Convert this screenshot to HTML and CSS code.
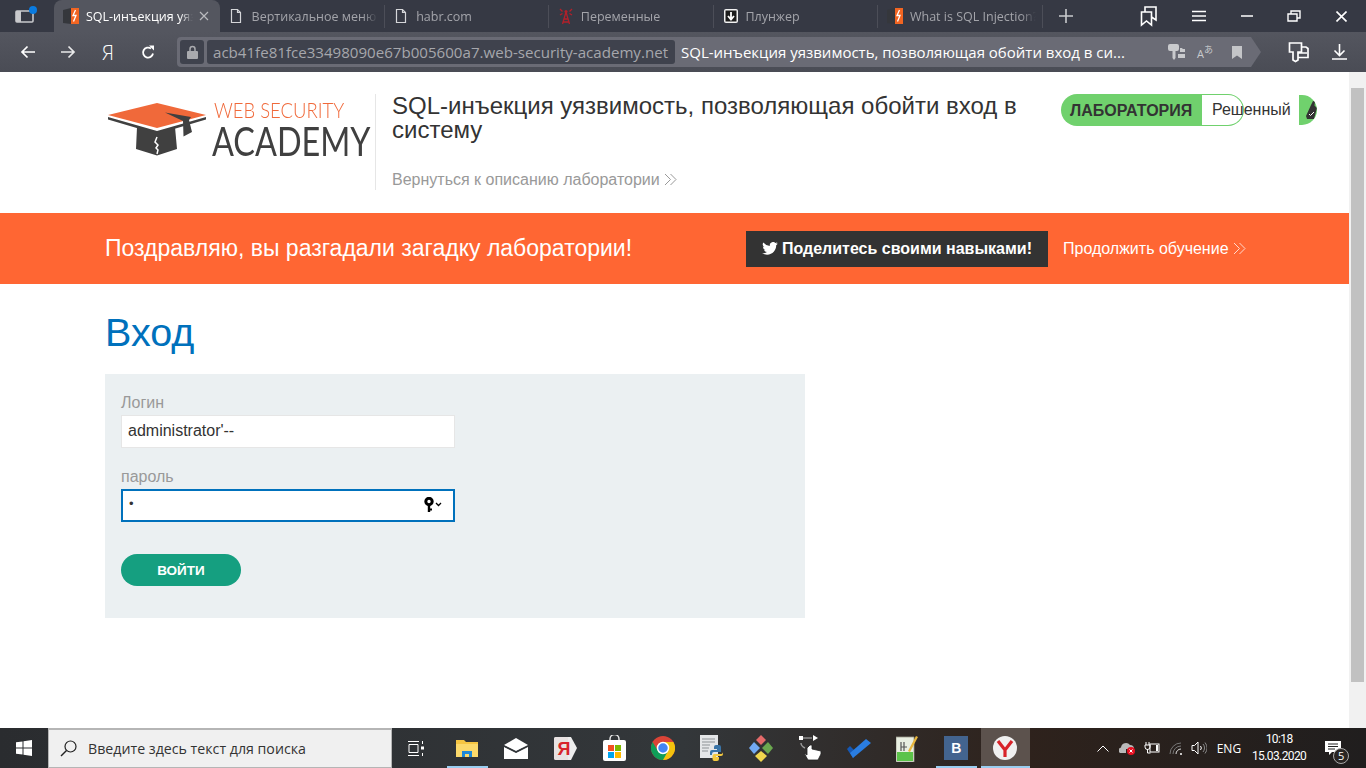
FILE: index.html
```html
<!DOCTYPE html>
<html lang="ru">
<head>
  <meta charset="UTF-8" />
  <title>SQL-инъекция уязвимость</title>
  <link rel="stylesheet" href="styles.css">
</head>
<body>

  <div class="tabstrip">
    <div class="sidebar-btn">
      <svg width="24" height="20" viewBox="0 0 24 20"><rect x="1" y="5" width="17" height="11" rx="1" fill="none" stroke="#c8c9cc" stroke-width="1.6"/><rect x="1" y="5" width="5" height="11" fill="#c8c9cc"/><circle cx="18" cy="4" r="4" fill="#0a7be0"/></svg>
    </div>
    <div class="tab active">
      <svg class="favicon" width="16" height="18" viewBox="0 0 16 18"><path d="M0 3 8 1v16l-8-1z" fill="#35373c"/><path d="M8 1h8v16H8z" fill="#f26522"/><path d="M12.500 3 10 8.500h3l-2.500 6" fill="none" stroke="#fff" stroke-width="1.300"/></svg>
      <span class="tab-title">SQL-инъекция уязвимость</span>
      <svg class="tab-close" width="10" height="10" viewBox="0 0 10 10"><path d="M1 1l8 8M9 1l-8 8" stroke="#b9babe" stroke-width="1.2"/></svg>
    </div>
    <div class="tab">
      <svg class="favicon" width="12" height="16" viewBox="0 0 12 16"><path d="M1.500 1.500h6l3 3v10h-9zM7.500 1.500v3h3" fill="none" stroke="#d5d6d9" stroke-width="1.2"/></svg>
      <span class="tab-title">Вертикальное меню</span>
    </div>
    <div class="tab">
      <svg class="favicon" width="12" height="16" viewBox="0 0 12 16"><path d="M1.500 1.500h6l3 3v10h-9zM7.500 1.500v3h3" fill="none" stroke="#d5d6d9" stroke-width="1.2"/></svg>
      <span class="tab-title">habr.com</span>
    </div>
    <div class="tab">
      <svg class="favicon" width="14" height="17" viewBox="0 0 14 17"><path d="M7 4 3.500 16M7 4l3.500 12M5 11h4M4.500 14h5M1 1l2.500 2.500M13 1l-2.500 2.500M1 7l2.500-1.500M13 7l-2.500-1.500" fill="none" stroke="#b3202a" stroke-width="1.3"/><circle cx="7" cy="3.500" r="1.500" fill="#b3202a"/></svg>
      <span class="tab-title">Переменные</span>
    </div>
    <div class="tab">
      <svg class="favicon" width="14" height="14" viewBox="0 0 14 14"><rect width="14" height="14" rx="2" fill="#f2f2f2"/><rect x="1.500" y="1.500" width="11" height="11" fill="#1c1c1c"/><path d="M7 3v7M4 7l3 3.500L10 7" fill="none" stroke="#fff" stroke-width="1.800"/></svg>
      <span class="tab-title">Плунжер</span>
    </div>
    <div class="tab last">
      <svg class="favicon" width="16" height="18" viewBox="0 0 16 18"><path d="M0 3 8 1v16l-8-1z" fill="#35373c"/><path d="M8 1h8v16H8z" fill="#f26522"/><path d="M12.500 3 10 8.500h3l-2.500 6" fill="none" stroke="#fff" stroke-width="1.300"/></svg>
      <span class="tab-title">What is SQL Injection?</span>
    </div>
    <div class="new-tab">
      <svg width="16" height="16" viewBox="0 0 16 16"><path d="M8 1v14M1 8h14" stroke="#c9cacd" stroke-width="1.600"/></svg>
    </div>
    <div class="win-btns">
      <svg class="win-bookmarks" width="18" height="22" viewBox="0 0 18 22"><path d="M1.500 7h10v13l-5-4-5 4zM5 7V2h11v13l-4.500-3" fill="none" stroke="#fff" stroke-width="1.600"/></svg>
      <svg width="14" height="12" viewBox="0 0 14 12"><path d="M0 1.500h14M0 6h14M0 10.500h14" stroke="#fff" stroke-width="1.500"/></svg>
      <svg width="12" height="2" viewBox="0 0 12 2"><path d="M0 1h12" stroke="#fff" stroke-width="1.500"/></svg>
      <svg width="14" height="12" viewBox="0 0 14 12"><path d="M1 4h9v7H1zM4 4V1h9v7h-3" fill="none" stroke="#fff" stroke-width="1.400"/></svg>
      <svg width="11" height="11" viewBox="0 0 11 11"><path d="M.5.500l10 10M10.500.500l-10 10" stroke="#fff" stroke-width="1.600"/></svg>
    </div>
  </div>

  <div class="toolbar">
    <div class="nav-btn"><svg width="16" height="14" viewBox="0 0 16 14"><path d="M15 7H2M7.500 1.500 2 7l5.500 5.500" fill="none" stroke="#fff" stroke-width="1.700"/></svg></div>
    <div class="nav-btn"><svg width="16" height="14" viewBox="0 0 16 14"><path d="M1 7h13M8.500 1.500 14 7l-5.500 5.500" fill="none" stroke="#e9e9ea" stroke-width="1.700"/></svg></div>
    <div class="nav-btn ya">Я</div>
    <div class="nav-btn"><svg width="14" height="15" viewBox="0 0 14 15"><path d="M12 8.500a5 5 0 1 1-2-5" fill="none" stroke="#fff" stroke-width="1.800"/><path d="M8 .500l5 0v5z" fill="#fff"/></svg></div>
    <div class="omnibox">
      <div class="lock-chip"><svg width="11" height="14" viewBox="0 0 11 14"><path d="M3 6V4a2.500 2.500 0 0 1 5 0v2" fill="none" stroke="#a9aaae" stroke-width="1.500"/><rect y="6" width="11" height="8" rx="1" fill="#a9aaae"/></svg></div>
      <div class="domain-chip">acb41fe81fce33498090e67b005600a7.web-security-academy.net</div>
      <div class="page-title">SQL-инъекция уязвимость, позволяющая обойти вход в си...</div>
      <svg class="omni-icon" width="17" height="16" viewBox="0 0 17 16"><path d="M2 0h7a2 2 0 0 1 2 2v3a2 2 0 0 1-2 2H7.500v7l-1.500 2-1.500-2V7H2a2 2 0 0 1-2-2V2a2 2 0 0 1 2-2z" fill="#c9cacd"/><path d="M12 4h2l.800 1H17v3h-5zM10 10h7v4h-7z" fill="#c9cacd"/></svg>
      <span class="omni-translate">A<small>あ</small></span>
      <svg class="omni-mark" width="10" height="13" viewBox="0 0 10 13"><path d="M0 0h10v13L5 9.500 0 13z" fill="#c4c5c8"/></svg>
    </div>
    <svg class="tool-right" width="22" height="22" viewBox="0 0 22 22"><path d="M1.500 2h12v9H10v8l-2.500 1.500L5 19v-8H1.500zM14 6h4l2 1.500v9h-10M10 12h9" fill="none" stroke="#fff" stroke-width="1.700"/></svg>
    <svg class="tool-right" width="15" height="16" viewBox="0 0 15 16"><path d="M7.500 0v11M2.500 6.500l5 5 5-5M0 15h15" fill="none" stroke="#fff" stroke-width="1.600"/></svg>
  </div>

  <div class="viewport">
    <div class="page">
      <header class="lab-header">
        <div class="logo">
          <svg class="logo-cap" width="100" height="56" viewBox="0 0 100 56">
            <path d="M1 13 50 1l49 12-49 13z" fill="#f0693a"/>
            <path d="M1 15l49 14 49-14v2.500L50 32 1 17.500z" fill="#404040"/>
            <path d="M30 25l20 6 18-6 2 22-20 6.500L29 47z" fill="#404040"/>
            <path d="M50 35l-2 5 3 3-2 3 2 2 -1 4" fill="none" stroke="#fff" stroke-width="1.500"/>
            <path d="M58 10.500 84 15l-2 3 3 12-8.500 4.500L76 19z" fill="#404040"/>
          </svg>
          <div class="logo-text">
            <span class="logo-top">WEB SECURITY</span>
            <span class="logo-bottom">ACADEMY</span>
          </div>
        </div>
        <div class="lab-title">
          <h2>SQL-инъекция уязвимость, позволяющая обойти вход в систему</h2>
          <a class="back-link" href="#">Вернуться к описанию лаборатории
            <svg class="chevrons" width="13" height="13" viewBox="0 0 13 13"><path d="M1 1l5.500 5.500L1 12M6.500 1 12 6.500 6.500 12" fill="none" stroke="#999" stroke-width="1"/></svg>
          </a>
        </div>
        <div class="lab-status">
          <span class="status-name">ЛАБОРАТОРИЯ</span>
          <span class="status-value">Решенный</span>
          <span class="status-icon">
            <svg width="11" height="18" viewBox="0 0 11 18"><path d="M7 0l2 .500-.500 4L11 7l-3 11H1L0 15l5-11z" fill="#333"/><path d="M3 13l1.500 1.500L8 11" fill="none" stroke="#fff" stroke-width="1"/></svg>
          </span>
        </div>
      </header>

      <section class="solved-banner">
        <h4>Поздравляю, вы разгадали загадку лаборатории!</h4>
        <a class="share-btn" href="#">
          <svg width="16" height="13" viewBox="0 0 24 20"><path d="M24 2.400a10 10 0 0 1-2.800.8A5 5 0 0 0 23.300.5a9.800 9.800 0 0 1-3.100 1.200 4.900 4.900 0 0 0-8.400 4.500A14 14 0 0 1 1.700.9a4.900 4.900 0 0 0 1.500 6.600 4.900 4.900 0 0 1-2.200-.6 4.900 4.900 0 0 0 3.900 4.900 4.900 4.900 0 0 1-2.200.1 4.900 4.900 0 0 0 4.600 3.400A9.900 9.900 0 0 1 0 17.300 14 14 0 0 0 7.500 19.500c9.100 0 14.300-7.700 14-14.600A10 10 0 0 0 24 2.400z" fill="#fff"/></svg>
          Поделитесь своими навыками!
        </a>
        <a class="continue-link" href="#">Продолжить обучение
          <svg class="chevrons" width="13" height="13" viewBox="0 0 13 13"><path d="M1 1l5.500 5.500L1 12M6.500 1 12 6.500 6.500 12" fill="none" stroke="#ffd9cc" stroke-width="1"/></svg>
        </a>
      </section>

      <main class="content">
        <h1>Вход</h1>
        <form class="login-form">
          <label for="username">Логин</label>
          <input id="username" type="text" value="administrator'--">
          <label for="password">пароль</label>
          <div class="password-wrap">
            <input id="password" type="password" value="a">
            <svg class="key-icon" width="18" height="15" viewBox="0 0 18 15"><circle cx="5" cy="4.500" r="3.200" fill="none" stroke="#000" stroke-width="3"/><path d="M3.800 8v7h2.400v-1.500H8v-2H6.200V8z" fill="#000"/><path d="M12 6l2.500 2.500L17 6" fill="none" stroke="#000" stroke-width="1.300"/></svg>
          </div>
          <button type="button">ВОЙТИ</button>
        </form>
      </main>
    </div>
    <div class="scrollbar"><div class="scroll-thumb"></div></div>
  </div>

  <footer class="taskbar">
    <div class="start-btn">
      <svg width="16" height="16" viewBox="0 0 16 16"><path d="M0 2.300 6.500 1.400V7.500H0zM7.500 1.200 16 0v7.500H7.500zM0 8.500h6.500v6.100L0 13.700zM7.500 8.500H16V16l-8.500-1.200z" fill="#fff"/></svg>
    </div>
    <div class="search-box">
      <svg width="17" height="17" viewBox="0 0 17 17"><circle cx="10.500" cy="6.500" r="5.500" fill="none" stroke="#222" stroke-width="1.200"/><path d="M6.500 10.500 1 16" stroke="#222" stroke-width="1.400"/></svg>
      <span>Введите здесь текст для поиска</span>
    </div>
    <div class="task-view">
      <svg width="17" height="15" viewBox="0 0 17 15"><path d="M0 .500h11M0 14.500h11M1 3.500h9v8H1zM14.500 0v3M14.500 12v3" fill="none" stroke="#fff" stroke-width="1"/><rect x="13" y="5.500" width="3" height="3" fill="#fff"/></svg>
    </div>
    <div class="task-icons">
      <div class="task-item open">
        <svg width="24" height="21" viewBox="0 0 24 21"><path d="M1 2h8l2 2h12v15H1z" fill="#f5c542"/><rect x="1" y="6" width="22" height="13" fill="#fbd96b"/><path d="M7 13h10v6h-3v-3h-4v3H7z" fill="#1e88d8"/></svg>
      </div>
      <div class="task-item">
        <svg width="24" height="21" viewBox="0 0 24 21"><path d="M0 7 12 0l12 7-12 6z" fill="#fff"/><path d="M0 9l12 6 12-6v12H0z" fill="#fff"/><path d="M0 8l12 6 6-3" fill="none" stroke="#30343a" stroke-width="1"/></svg>
      </div>
      <div class="task-item">
        <svg width="23" height="25" viewBox="0 0 23 25"><path d="M2 1h15l6 11-6 12H2a2 2 0 0 1-2-2V3a2 2 0 0 1 2-2z" fill="#ededed"/><path d="M2 1h12v23H2a2 2 0 0 1-2-2V3a2 2 0 0 1 2-2z" fill="#e8e2e2"/><text class="ya-mark" x="3.500" y="19">Я</text></svg>
      </div>
      <div class="task-item">
        <svg width="23" height="26" viewBox="0 0 23 26"><path d="M7 6V4a4 4 0 0 1 9 0v2" fill="none" stroke="#eee" stroke-width="1.400"/><rect y="5" width="23" height="21" rx="2" fill="#fff"/><rect x="5" y="10" width="6" height="6" fill="#f25022"/><rect x="12" y="10" width="6" height="6" fill="#7fba00"/><rect x="5" y="17" width="6" height="6" fill="#00a4ef"/><rect x="12" y="17" width="6" height="6" fill="#ffb900"/></svg>
      </div>
      <div class="task-item">
        <svg width="24" height="24" viewBox="0 0 24 24"><circle cx="12" cy="12" r="12" fill="#db4437"/><path d="M12 24A12 12 0 0 0 22.400 6H12l-4 9z" fill="#f4c20d"/><path d="M1.600 6A12 12 0 0 0 12 24l5-9H7z" fill="#0f9d58"/><circle cx="12" cy="12" r="5.500" fill="#4285f4" stroke="#fff" stroke-width="1.500"/></svg>
      </div>
      <div class="task-item">
        <svg width="24" height="27" viewBox="0 0 24 27"><rect width="18" height="23" fill="#e4e6e8"/><path d="M2 4h13M2 7h13M2 10h8M2 13h7M2 16h6" stroke="#8d9296" stroke-width="1"/><path d="M10 17a2 2 0 0 1 2-2h5v-1h-3v-2a2 2 0 0 1 2-2h3a2 2 0 0 1 2 2v5h-7a2 2 0 0 0-2 2v1h-2z" fill="#3a75a8"/><path d="M23 14v5a2 2 0 0 1-2 2h-5v1h3v2a2 2 0 0 1-2 2h-3a2 2 0 0 1-1.500-2v-3a2 2 0 0 1 2-2h7a2 2 0 0 0 1.500-2v-3z" fill="#f4c93f"/></svg>
      </div>
      <div class="task-item">
        <svg width="24" height="27" viewBox="0 0 24 27"><path d="M12 0l5 5-5 5-5-5z" fill="#e46a6a"/><path d="M5 7l6 6-6 6-5-6z" fill="#72a9f2"/><path d="M19 7l5 6-5 6-6-6z" fill="#6ba84f"/><path d="M12 16l6 5-6 6-6-6z" fill="#f0d64e"/></svg>
      </div>
      <div class="task-item">
        <svg width="24" height="27" viewBox="0 0 24 27"><rect x="1" y="1" width="4" height="4" fill="#fff"/><path d="M5 3h9" stroke="#bbb" stroke-width="1"/><path d="M15 0l5 3-5 3z" fill="#fff"/><path d="M9 13v7l-3-2 4 7h10l3-6v-3l-9-2v-4h-2z" fill="#fff" stroke="#222" stroke-width=".8"/><path d="M3 8c0 3 2 4 4 5" fill="none" stroke="#999" stroke-width="1.400"/></svg>
      </div>
      <div class="task-item">
        <svg width="24" height="19" viewBox="0 0 24 19"><path d="M0 10l3-3 6 6-3 6z" fill="#1558b5"/><path d="M6 19l-3-5L19 0l5 4z" fill="#2a7de1"/></svg>
      </div>
      <div class="task-item">
        <svg width="22" height="27" viewBox="0 0 22 27"><path d="M0 2h18v25H0z" fill="#e9efe2" stroke="#9a9a8c" stroke-width=".8"/><path d="M1 17h16v9H1z" fill="#5cc34a"/><path d="M5 7v9M8 7v9M5 12h6" stroke="#555" stroke-width="1.200"/><path d="M20 1l2 1-8 15-2-1z" fill="#e8b63c"/></svg>
      </div>
      <div class="task-item open">
        <div class="vk-icon">В</div>
      </div>
      <div class="task-item open current">
        <svg width="24" height="24" viewBox="0 0 24 24"><circle cx="12" cy="12" r="12" fill="#f0f0f0"/><path d="M5 5l7 9 7-9M12 14v7" fill="none" stroke="#d8232a" stroke-width="3.200"/></svg>
      </div>
    </div>
    <div class="tray">
      <svg class="tray-chevron" width="12" height="7" viewBox="0 0 12 7"><path d="M.5 6.500 6 1l5.500 5.500" fill="none" stroke="#fff" stroke-width="1"/></svg>
      <svg class="tray-cloud" width="16" height="14" viewBox="0 0 16 14"><path d="M1 12a3 3 0 0 1 1-5.500A5 5 0 0 1 11 4a4 4 0 0 1 4 4H7v4z" fill="#b9b9b9"/><circle cx="12" cy="10" r="4" fill="#e81123"/><path d="M10.500 8.500l3 3M13.500 8.500l-3 3" stroke="#fff" stroke-width="1"/></svg>
      <svg class="tray-power" width="16" height="12" viewBox="0 0 16 12"><rect x="6" y="2" width="9" height="8" fill="none" stroke="#fff" stroke-width="1"/><rect x="12" y="3" width="2" height="6" fill="#fff"/><path d="M1 3h5v2a2 2 0 0 1-5 0zM2 0v3M5 0v3M3.500 7v4h3" fill="none" stroke="#fff" stroke-width="1"/></svg>
      <svg class="tray-wifi" width="15" height="13" viewBox="0 0 15 13"><path d="M1 12a11 11 0 0 1 11-11M4 12a8 8 0 0 1 8-8" fill="none" stroke="#777" stroke-width="1"/><path d="M7 12a5 5 0 0 1 5-5" fill="none" stroke="#ddd" stroke-width="1"/><circle cx="12" cy="12" r="1" fill="#fff"/></svg>
      <svg class="tray-sound" width="16" height="14" viewBox="0 0 16 14"><path d="M1 4.500h2.500L7 1v12L3.500 9.500H1z" fill="none" stroke="#fff" stroke-width="1"/><path d="M9.500 5a3 3 0 0 1 0 4" fill="none" stroke="#fff" stroke-width="1"/><path d="M12 3a6 6 0 0 1 0 8M14 1.500a9 9 0 0 1 0 11" fill="none" stroke="#8a8a8a" stroke-width="1"/></svg>
      <span class="tray-lang">ENG</span>
      <div class="tray-clock"><span>10:18</span><span>15.03.2020</span></div>
      <div class="tray-notify">
        <svg width="16" height="14" viewBox="0 0 16 14"><path d="M0 0h16v11H7l-3 3v-3H0z" fill="#fff"/><path d="M3 3h10M3 5.500h10M3 8h7" stroke="#222" stroke-width="1"/></svg>
        <span class="notify-count">5</span>
      </div>
    </div>
  </footer>

</body>
</html>
```
FILE: styles.css
```css
* {
  box-sizing: border-box;
  margin: 0;
  padding: 0;
}
html, body {
  height: 768px;
  overflow: hidden;
}
body {
  display: flex;
  flex-direction: column;
  width: 1366px;
  background: #fff;
  font-family: "Liberation Sans", Arial, sans-serif;
}

/* browser chrome */
.tabstrip {
  display: flex;
  align-items: stretch;
  height: 32px;
  background: #363944;
  font-family: "Open Sans", sans-serif;
  font-size: 12.5px;
}
.sidebar-btn {
  display: flex;
  align-items: center;
  width: 54px;
  padding-left: 15px;
}
.tab {
  display: flex;
  align-items: center;
  justify-content: space-between;
  width: 164.600px;
  padding: 0 7px 0 10px;
  color: #a3a4aa;
  position: relative;
}
.tab.last {
  padding-left: 9px;
}
.tab::after {
  content: "";
  position: absolute;
  right: 0;
  top: 5px;
  bottom: 4px;
  width: 1px;
  background: #4c4e58;
}
.tab.active {
  justify-content: flex-start;
  width: 166px;
  padding: 0 11px 0 9px;
  background: #54565f;
  border-radius: 8px 8px 0 0;
  color: #fff;
}
.tab.active::after {
  display: none;
}
.favicon {
  flex: none;
}
.tab-title {
  flex: none;
  width: 126px;
  overflow: hidden;
  white-space: nowrap;
  -webkit-mask-image: linear-gradient(to right, #000 88%, transparent);
  mask-image: linear-gradient(to right, #000 88%, transparent);
}
.tab.active .tab-title {
  width: 107px;
  margin-left: 7px;
}
.tab-close {
  flex: none;
  margin-left: auto;
}
.new-tab {
  display: flex;
  align-items: center;
  padding-left: 15px;
  width: 68px;
}
.win-btns {
  display: flex;
  align-items: center;
  flex: 1;
  justify-content: space-between;
  padding: 0 19px 0 29px;
}
.win-btns svg {
  display: block;
}
.toolbar {
  display: flex;
  align-items: center;
  height: 40px;
  padding-left: 8px;
  background: linear-gradient(#54565f, #4a4c55);
}
.nav-btn {
  display: flex;
  align-items: center;
  justify-content: center;
  width: 40px;
}
.ya {
  color: #fff;
  font-family: "Open Sans", sans-serif;
  font-size: 20px;
  font-weight: 300;
}
.omnibox {
  display: flex;
  align-items: center;
  width: 1074px;
  height: 30px;
  margin-left: 9px;
  padding-left: 3px;
  background: #6a6b75;
  border-radius: 4px 0 0 4px;
  font-family: "Open Sans", sans-serif;
  font-size: 15px;
  position: relative;
}
.omnibox::after {
  content: "";
  position: absolute;
  left: 100%;
  top: 0;
  border-left: 10px solid #6a6b75;
  border-top: 15px solid transparent;
  border-bottom: 15px solid transparent;
}
.lock-chip {
  display: flex;
  align-items: center;
  justify-content: center;
  flex: none;
  width: 24px;
  height: 24px;
  background: #3f424d;
  border-radius: 3px;
}
.domain-chip {
  flex: none;
  width: 468px;
  height: 24px;
  margin-left: 3px;
  padding-left: 6px;
  background: #3f424d;
  border-radius: 3px;
  color: #a6a7ac;
  font-size: 15.100px;
  line-height: 25px;
  white-space: nowrap;
}
.page-title {
  flex: none;
  width: 487px;
  margin-left: 6px;
  color: #fff;
  white-space: nowrap;
}
.omni-icon {
  flex: none;
}
.omni-translate {
  margin-left: 12px;
  color: #c9cacd;
  font-size: 11px;
}
.omni-translate small {
  font-family: "Noto Sans CJK JP", sans-serif;
  font-size: 9px;
  vertical-align: 5px;
}
.omni-mark {
  flex: none;
  margin-left: 19px;
}
.tool-right {
  margin-left: 22px;
}
.toolbar > svg:first-of-type {
  margin-left: 37px;
}

/* page */
.viewport {
  display: flex;
  flex: 1;
  min-height: 0;
}
.page {
  flex: 1;
  min-width: 0;
}
.scrollbar {
  width: 17px;
  padding: 16px 2px;
  background: #f1f1f1;
}
.scroll-thumb {
  height: 594px;
  background: #c1c1c1;
}
.lab-header {
  display: flex;
  align-items: flex-start;
  height: 141px;
  padding: 22px 0 0 107px;
}
.logo {
  display: flex;
  width: 268px;
  padding-top: 7px;
}
.logo-cap {
  flex: none;
  margin-top: 1px;
}
.logo-text {
  display: flex;
  flex-direction: column;
  margin-left: 5px;
  font-family: Lato, sans-serif;
}
.logo-top {
  margin: 0 0 0 2px;
  color: #f0693a;
  font-size: 21px;
  font-weight: 300;
  line-height: 17px;
  white-space: nowrap;
  transform: scaleX(.88);
  transform-origin: left;
}
.logo-bottom {
  margin-top: 6px;
  color: #404040;
  font-size: 41px;
  line-height: 33px;
  white-space: nowrap;
  transform: scaleX(.79);
  transform-origin: left;
}
.lab-title {
  width: 686px;
  height: 96px;
  padding: 0 30px 0 16px;
  border-left: 1px solid #e6e6e6;
  color: #333;
}
.lab-title h2 {
  height: 62px;
  font-size: 24px;
  font-weight: 400;
  line-height: 24px;
}
.back-link {
  display: block;
  margin-top: 15px;
  color: #999;
  font-size: 16px;
  text-decoration: none;
}
.chevrons {
  vertical-align: -1px;
}
.lab-status {
  display: flex;
  align-items: center;
  height: 32px;
  color: #333;
  font-size: 16px;
}
.status-name {
  width: 141px;
  height: 32px;
  padding-left: 9px;
  background: #70d16d;
  border-radius: 16px 0 0 16px;
  font-weight: 700;
  line-height: 33px;
}
.status-value {
  width: 42px;
  height: 32px;
  padding-left: 10px;
  border: 1px solid #70d16d;
  border-left: 0;
  border-radius: 0 16px 16px 0;
  line-height: 30px;
  white-space: nowrap;
}
.status-icon {
  display: flex;
  align-items: center;
  justify-content: flex-end;
  width: 18px;
  height: 30px;
  margin-left: 55px;
  background: #70d16d;
  border-radius: 0 15px 15px 0;
  overflow: hidden;
}
.solved-banner {
  display: flex;
  align-items: center;
  height: 71px;
  padding-left: 105px;
  background: #ff6633;
  color: #fff;
}
.solved-banner h4 {
  width: 641px;
  font-size: 23px;
  font-weight: 400;
}
.share-btn {
  display: flex;
  align-items: center;
  justify-content: center;
  gap: 4px;
  width: 302px;
  height: 36px;
  background: #333;
  color: #fff;
  font-size: 16px;
  font-weight: 700;
  text-decoration: none;
}
.continue-link {
  margin-left: 15px;
  color: #fff;
  font-size: 16px;
  text-decoration: none;
}
.content {
  padding: 23px 0 0 105px;
}
.content h1 {
  color: #0071bc;
  font-size: 39.500px;
  font-weight: 400;
  line-height: 50px;
}
.login-form {
  width: 700px;
  height: 244px;
  margin-top: 17px;
  padding: 19px 16px 0;
  background: #ebf0f2;
}
.login-form label {
  display: block;
  height: 22px;
  padding-top: 1px;
  color: #999;
  font-size: 16px;
  line-height: 18px;
}
.login-form input {
  display: block;
  width: 334px;
  height: 33px;
  padding: 0 6px 2px;
  background: #fff;
  border: 1px solid #e6e6e6;
  color: #333;
  font-family: "Liberation Sans", Arial, sans-serif;
  font-size: 16px;
}
#username {
  margin-bottom: 19px;
}
#password {
  padding-bottom: 5px;
  border: 2px solid #0071bc;
  outline: none;
  font-size: 13px;
}
.password-wrap {
  position: relative;
  width: 334px;
}
.key-icon {
  position: absolute;
  right: 13px;
  top: 8px;
}
.login-form button {
  display: block;
  width: 120px;
  height: 32px;
  margin-top: 32px;
  background: #159f80;
  border: 0;
  border-radius: 16px;
  color: #fff;
  font-family: "Liberation Sans", Arial, sans-serif;
  font-size: 13.500px;
  font-weight: 700;
}

/* windows taskbar */
.taskbar {
  display: flex;
  align-items: stretch;
  height: 40px;
  background: linear-gradient(to right, #2a2c2f, #33373a 50%, #2e221c 75%, #201e1e);
  color: #fff;
  font-family: "Open Sans", sans-serif;
}
.start-btn {
  display: flex;
  align-items: center;
  justify-content: center;
  width: 48px;
}
.search-box {
  display: flex;
  align-items: center;
  gap: 11px;
  width: 344px;
  padding-left: 11px;
  background: #f0f0f0;
  border: 1px solid #b5b5b5;
  border-width: 2px 1px 1px;
  color: #333;
  font-size: 14.200px;
}
.task-view {
  display: flex;
  align-items: center;
  justify-content: center;
  width: 48px;
}
.task-icons {
  display: flex;
  padding-left: 3px;
}
.task-item {
  display: flex;
  align-items: center;
  justify-content: center;
  width: 48.900px;
  position: relative;
}
.task-item.open::after {
  content: "";
  position: absolute;
  left: 4px;
  right: 4px;
  bottom: 0;
  height: 2px;
  background: #99cdf0;
}
.task-item.current {
  background: #5c524d;
}
.task-item.current::after {
  left: 0;
  right: 0;
}
.ya-mark {
  fill: #d8232a;
  font-family: "Liberation Sans", sans-serif;
  font-size: 18px;
  font-weight: 700;
}
.vk-icon {
  width: 24px;
  height: 24px;
  background: #43648f;
  color: #fff;
  font-family: "Liberation Sans", sans-serif;
  font-size: 14px;
  font-weight: 700;
  line-height: 24px;
  text-align: center;
}
.tray {
  display: flex;
  align-items: center;
  flex: 1;
  padding-left: 67px;
  font-size: 12px;
}
.tray-cloud {
  margin-left: 10px;
}
.tray-power {
  margin-left: 9px;
}
.tray-wifi {
  margin-left: 9px;
}
.tray-sound {
  margin-left: 7px;
}
.tray-lang {
  margin-left: 10px;
  font-size: 12px;
}
.tray-clock {
  display: flex;
  flex-direction: column;
  align-items: center;
  width: 72px;
  margin-left: 2px;
  font-family: Roboto, sans-serif;
  letter-spacing: -.6px;
  line-height: 17px;
}
.tray-notify {
  margin-left: 10px;
  position: relative;
}
.tray-notify svg {
  display: block;
}
.notify-count {
  position: absolute;
  left: 8px;
  top: 7px;
  width: 16px;
  height: 16px;
  background: #2a2624;
  border: 1px solid #aaa;
  border-radius: 50%;
  font-size: 11px;
  line-height: 14px;
  text-align: center;
}
```
